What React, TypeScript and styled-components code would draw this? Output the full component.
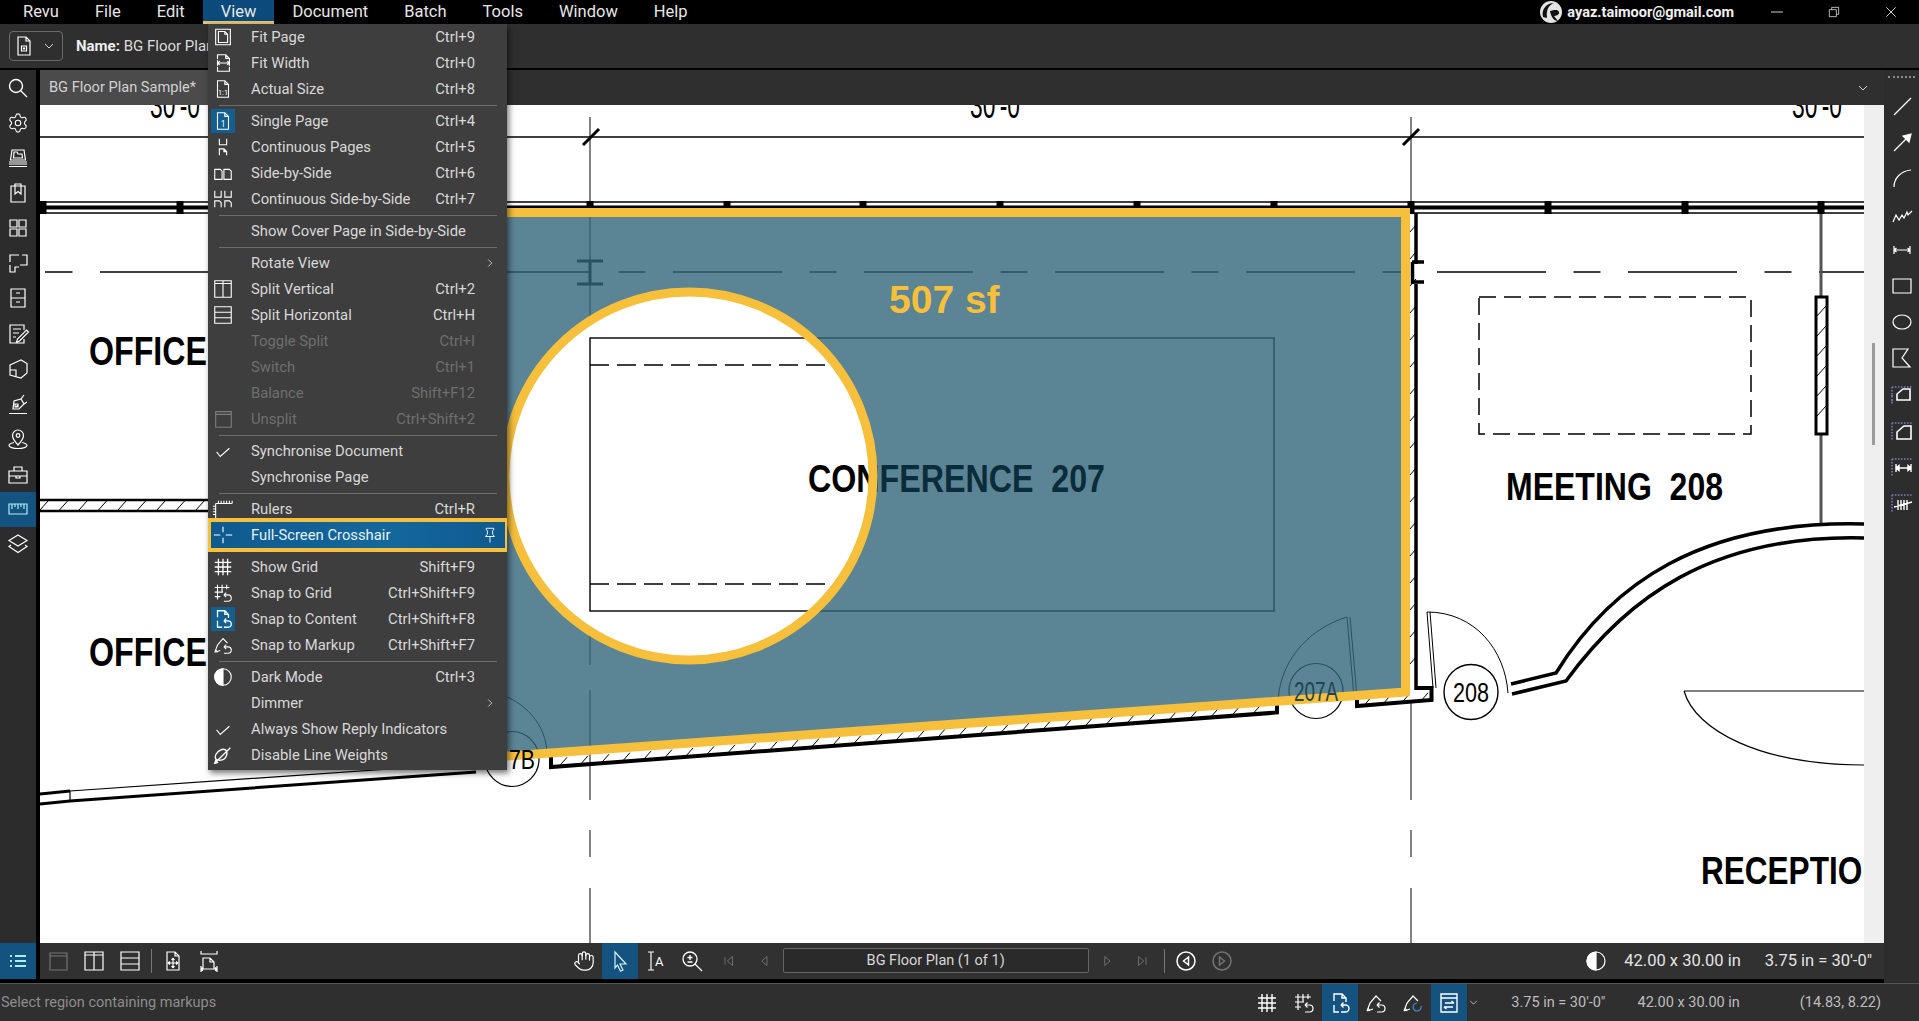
import { ReactNode } from 'react';
import styled, { createGlobalStyle } from 'styled-components';
import { Hand, Settings } from 'lucide-react';

const pageLine = 'M6 3h8l4 4v14H6zM14 3v4h4';
const snapArrow = 'M13 14h4.5a3.5 3.5 0 0 1 0 7H13M13 14l2.5-2.5M13 14l2.5 2.5';

const paths: Record<string, ReactNode> = {
	// menu
	fitPage: <path d="M4 3.5h16v17H4zM7 6h7l3 3v9H7zM14 6v3h3" />,
	fitWidth: <path d="M6 8V3h9l4 4v3M15 3v4h4M6 16v5h13v-5M6 9v6M19 9v6M6 12h13M6 12l2.500-2M6 12l2.500 2M19 12l-2.500-2M19 12l-2.500 2" />,
	actual: (
		<>
			<path d={pageLine} />
			<text x="12" y="18" fontSize="8" fill="#fff" stroke="none" textAnchor="middle" fontFamily="Roboto">1:1</text>
		</>
	),
	single: (
		<>
			<path d={pageLine} />
			<text x="12" y="18" fontSize="9" fill="#fff" stroke="none" textAnchor="middle" fontFamily="Roboto">1</text>
		</>
	),
	continuous: <path d="M8 3v6.500h8V3M8 21v-7h5l3 3v4M13 14v3h3" />,
	sideBySide: <path d="M3 8h6l2 2v9H3zM13 8h6l2 2v9h-8z" />,
	contSide: <path d="M3 3v7h7V3M14 3v7h7V3M3 21v-7h5l2 2v5M14 21v-7h5l2 2v5" />,
	splitV: <path d="M3 3h18v18H3zM12 3v18M3 6h18" />,
	splitH: <path d="M3 3h18v18H3zM3 9h18M3 15h18" />,
	unsplit: <path d="M4 4h17v17H4zM4 7h17" />,
	check: <path d="M5 13l4 5L19 9" />,
	rulers: <path d="M4 6h18M4 6v18M7 3v3M10 3v3M13 3v3M16 3v3M19 3v3M22 3v3M1 9h3M1 12h3M1 15h3M1 18h3" />,
	crosshair: <path d="M12 3v6M12 15v6M2 12h7M15 12h7" />,
	grid: <path d="M7 3v18M12 3v18M17 3v18M3 7h18M3 12h18M3 17h18" strokeWidth="1.400" />,
	snapGrid: <path d={`M6 3v16M11 3v8M16 3v5M3 6h16M3 11h9M3 16h6${snapArrow}`} />,
	snapContent: <path d={`M6 10V3h8l4 4v4M6 14v7h5M14 3v4h4${snapArrow}`} strokeWidth="1.400" />,
	snapMarkup: <path d={`M3 20l3-8 6-7 5 5M3 20l6-2M4 17l2 3${snapArrow}`} />,
	snapMarkupAlt: (
		<>
			<path d="M3 20l3-8 6-7 5 5M3 20l6-2M4 17l2 3" />
			<path d="M20 15a4 4 0 1 1-4-3" stroke="#3a8fd0" />
		</>
	),
	dark: <path d="M12 3a9 9 0 0 0 0 18z" fill="#fff" stroke="#fff" />,
	darkRing: (
		<>
			<circle cx="12" cy="12" r="9" />
			<path d="M12 3a9 9 0 0 0 0 18z" fill="#fff" />
		</>
	),
	weights: <path d="M7 8c4-3 8-3 9 0s-1 8-4 9-7 1-8-1 0-5 3-8zM4 20L20 4M3 21l3-1-2-2z" strokeWidth="1.500" />,
	pin: <path d="M7 3h10v2l-1.500 1v5l2.500 3H6l2.500-3V6L7 5zM12 14v8" />,
	chevron: <path d="M9 6l6 6-6 6" />,
	chevronDown: <path d="M6 9l6 6 6-6" />,
	// left rail
	search: <path d="M10 3.500a6.500 6.500 0 1 0 0 13 6.500 6.500 0 0 0 0-13zM15 15l6 6" strokeWidth="1.400" />,
	studio: <path d="M6 4h12l1.500 10h-15zM8 6h3l1 2h4l.5 4h-9zM3 16h18M3 18h18M3 20.500h18" />,
	bookmark: <path d="M5 5h14v16H5zM9 3v10l3-2.500 3 2.500V3z" />,
	thumbs: <path d="M4 4h7v7H4zM13 4h7v7h-7zM4 13h7v7H4zM13 13h7v7h-7z" />,
	floor: <path d="M4 11V4h9M16 4h5v10h-7M21 14v0M4 14v7h5v-5h4" />,
	cabinet: <path d="M5 3h14v18H5zM5 12h14M10 7h4M10 16h4" />,
	note: <path d="M18 8V3H4v18h14v-4M7 7h8M7 11h6M7 15h3M20.500 8l2 2-9 9-3 1 1-3z" />,
	model: <path d="M4 8l11-5 6 3.500V16l-6 5-11-3zM4 13h6v6" />,
	nib: <path d="M3 21.500h18M7 17l1-8 7-2 3 5-5 5zM15 7l3-4M18 12l3-2M10 15l2-2M9 12h3v3H9z" />,
	place: (
		<>
			<path d="M12 3a5.500 5.500 0 0 1 5.500 5.500C17.500 12 12 18 12 18S6.500 12 6.500 8.500A5.500 5.500 0 0 1 12 3zM8 15.500c-3 .7-5 1.800-5 3 0 1.500 4 3 9 3s9-1.500 9-3c0-1.200-2-2.300-5-3" />
			<circle cx="12" cy="8.500" r="1.800" />
		</>
	),
	toolbox: <path d="M3 9h18v12H3zM8 9V5h8v4M3 14h18M10 14v2h4v-2" />,
	ruler: <path d="M3 7h18v10H3zM6 7v5M9 7v3M12 7v5M15 7v3M18 7v5" stroke="#a8f0f4" />,
	layers: <path d="M12 3l9 5.500-9 5.500-9-5.500zM5 13l-2 1.500 9 6 9-6-2-1.500" />,
	list: <path d="M9 7h11M9 12h11M9 17h11M4 7h2M4 12h2M4 17h2" stroke="#a8f0f4" strokeWidth="2.200" />,
	// right rail
	line: <path d="M4 21L21 4" />,
	arrow: (
		<>
			<path d="M4 21L18 7" />
			<path d="M21 4l-8 2 6 6z" fill="#fff" />
		</>
	),
	arc: <path d="M4 21C4 12 11 5 21 4" />,
	zigzag: <path d="M3 20l3-7 3 5 3-5 2 3 3-6 1 3 4-4" />,
	dim: <path d="M4 12h16M4 8v8M20 8v8M4 12l2.500-2M4 12l2.500 2M20 12l-2.500-2M20 12l-2.500 2" />,
	rect: <path d="M3 5h18v14H3z" />,
	ellipse: <ellipse cx="12" cy="12" rx="9" ry="7" />,
	polyShape: <path d="M3 3h15l-6 9 8 9H3z" />,
	area: (
		<>
			<path d="M2 5h20M2 5v17M2 8v2M2 13v2M2 18v2" stroke="#6a6aa0" strokeDasharray="1.500 1.500" strokeWidth="2" />
			<path d="M7 18V12l6-5h7v11z" strokeWidth="1.600" />
		</>
	),
	cut: (
		<>
			<path d="M2 5h20M2 5v17" stroke="#6a6aa0" strokeDasharray="1.500 1.500" strokeWidth="2" />
			<path d="M7 21V14l7-6h7v13z" strokeWidth="1.600" />
		</>
	),
	span: (
		<>
			<path d="M2 5h20M2 5v17" stroke="#6a6aa0" strokeDasharray="1.500 1.500" strokeWidth="2" />
			<path d="M6 10v8M21 10v8M6 14h15M6 14l3-2.500v5zM21 14l-3-2.500v5z" strokeWidth="1.400" fill="#fff" />
		</>
	),
	tally: (
		<>
			<path d="M2 5h20M2 5v17" stroke="#6a6aa0" strokeDasharray="1.500 1.500" strokeWidth="2" />
			<path d="M8 10v10M11 10v10M14 10v10M17 10v10M4 17l18-5" strokeWidth="1.400" />
		</>
	),
	// bottom
	fitAll: <path d="M6 3h8l4 4v14H6zM14 3v4h4M12 9v10M7 14h10M12 9l-1.500 2M12 9l1.500 2M12 19l-1.500-2M12 19l1.500-2M7 14l2-1.500M7 14l2 1.500M17 14l-2-1.500M17 14l-2 1.500" />,
	fitWide: <path d="M4 2v3h16V2M6 20V9h7l4 4v7M13 9v4h4M4 20h16M4 17v6M20 17v6M4 20l2-1.500M4 20l2 1.500M20 20l-2-1.500M20 20l-2 1.500" />,
	cursor: <path d="M7 3l11 12h-6l3 6-2.500 1.300-3-6.300L7 19z" stroke="#d5f3fa" />,
	textSelect: (
		<>
			<path d="M4 3h6M4 21h6M7 3v18" />
			<text x="11" y="17" fontSize="13" fill="#fff" stroke="none" fontFamily="Roboto">A</text>
		</>
	),
	zoomTool: <path d="M10 3a7 7 0 1 0 0 14 7 7 0 0 0 0-14zM15 15l7 7M10 6v5M7.500 8.500h5M7.500 13h5" strokeWidth="1.300" />,
	first: <path d="M8 7v10M18 6l-7 6 7 6z" />,
	prev: <path d="M16 6l-7 6 7 6z" />,
	next: <path d="M9 6l7 6-7 6z" />,
	last: <path d="M6 6l7 6-7 6zM16 7v10" />,
	back: <path d="M12 3a9 9 0 1 0 0 18 9 9 0 0 0 0-18zM14.500 8l-5 4 5 4z" strokeWidth="1.500" />,
	forward: <path d="M12 3a9 9 0 1 0 0 18 9 9 0 0 0 0-18zM9.500 8l5 4-5 4z" strokeWidth="1.500" />,
	sync: <path d="M4 3h16v18H4zM4 7h16M8 12h9M17 12l-2.500-2M16 16H7M7 16l2.500 2" strokeWidth="1.400" />,
	docIcon: <path d="M6 3h8l4 4v14H6zM14 3v4h4M9.500 12h5v5h-5zM11.500 14h1v1h-1z" />,
	minimize: <path d="M3 12h18" />,
	restore: <path d="M4 8h12v12H4zM8 8V4h12v12h-4" />,
	close: <path d="M5 5l14 14M19 5L5 19" />,
};

type IconProps = {
	name: string;
	size?: number;
	dim?: boolean;
};

function Icon({ name, size = 24, dim = false }: IconProps) {
	return (
		<IconSvg viewBox="0 0 24 24" width={size} height={size} $dim={dim}>
			{paths[name]}
		</IconSvg>
	);
}

type MenuEntry =
	| 'sep'
	| {
			label: string;
			keys?: string;
			icon?: string;
			on?: boolean;
			off?: boolean;
			more?: boolean;
			hot?: boolean;
	  };

const menu: MenuEntry[] = [
	{ label: 'Fit Page', keys: 'Ctrl+9', icon: 'fitPage' },
	{ label: 'Fit Width', keys: 'Ctrl+0', icon: 'fitWidth' },
	{ label: 'Actual Size', keys: 'Ctrl+8', icon: 'actual' },
	'sep',
	{ label: 'Single Page', keys: 'Ctrl+4', icon: 'single', on: true },
	{ label: 'Continuous Pages', keys: 'Ctrl+5', icon: 'continuous' },
	{ label: 'Side-by-Side', keys: 'Ctrl+6', icon: 'sideBySide' },
	{ label: 'Continuous Side-by-Side', keys: 'Ctrl+7', icon: 'contSide' },
	'sep',
	{ label: 'Show Cover Page in Side-by-Side' },
	'sep',
	{ label: 'Rotate View', more: true },
	{ label: 'Split Vertical', keys: 'Ctrl+2', icon: 'splitV' },
	{ label: 'Split Horizontal', keys: 'Ctrl+H', icon: 'splitH' },
	{ label: 'Toggle Split', keys: 'Ctrl+I', off: true },
	{ label: 'Switch', keys: 'Ctrl+1', off: true },
	{ label: 'Balance', keys: 'Shift+F12', off: true },
	{ label: 'Unsplit', keys: 'Ctrl+Shift+2', icon: 'unsplit', off: true },
	'sep',
	{ label: 'Synchronise Document', icon: 'check' },
	{ label: 'Synchronise Page' },
	'sep',
	{ label: 'Rulers', keys: 'Ctrl+R', icon: 'rulers' },
	{ label: 'Full-Screen Crosshair', icon: 'crosshair', hot: true },
	'sep',
	{ label: 'Show Grid', keys: 'Shift+F9', icon: 'grid' },
	{ label: 'Snap to Grid', keys: 'Ctrl+Shift+F9', icon: 'snapGrid' },
	{ label: 'Snap to Content', keys: 'Ctrl+Shift+F8', icon: 'snapContent', on: true },
	{ label: 'Snap to Markup', keys: 'Ctrl+Shift+F7', icon: 'snapMarkup' },
	'sep',
	{ label: 'Dark Mode', keys: 'Ctrl+3', icon: 'darkRing' },
	{ label: 'Dimmer', more: true },
	{ label: 'Always Show Reply Indicators', icon: 'check' },
	{ label: 'Disable Line Weights', icon: 'weights' },
];

const menuBarItems = ['Revu', 'File', 'Edit', 'View', 'Document', 'Batch', 'Tools', 'Window', 'Help'];
const leftTools = ['search', 'gear', 'studio', 'bookmark', 'thumbs', 'floor', 'cabinet', 'note', 'model', 'nib', 'place', 'toolbox', 'ruler', 'layers'];
const rightTools = ['line', 'arrow', 'arc', 'zigzag', 'dim', 'rect', 'ellipse', 'polyShape', 'area', 'cut', 'span', 'tally'];
const columns = [43, 180, 590, 727, 863, 1000, 1137, 1274, 1411, 1548, 1685, 1821];

// y of the thick slanted wall at a given x
const wallY = (x: number) => 766 - (x - 551) * 0.0744;

function range(from: number, to: number, step: number) {
	const out: number[] = [];
	for (let v = from; v <= to; v += step) out.push(v);
	return out;
}

function Plan() {
	return (
		<PlanSvg viewBox="40 105 1824 838" width="1824" height="838">
			<defs>
				<clipPath id="lens">
					<circle cx="689" cy="476" r="184" />
				</clipPath>
			</defs>

			<g fill="none" stroke="#000">
				{/* dimension strings */}
				<path d="M40 137H1864" strokeWidth="1.600" />
				<path d="M590 117V665M590 690V800M590 830V857M590 888V943M1411 117V205M1411 700V800M1411 830V857M1411 888V943" strokeWidth="1.200" stroke="#333" />
				<path d="M583 145L599 129M1403 145L1419 129" strokeWidth="3" />

				{/* top wall */}
				<path d="M40 202H1864M40 213H1864" strokeWidth="1.600" />
				<path d="M40 207.500H1864" strokeWidth="4" />
				{columns.map((x) => (
					<rect key={x} x={x - 3.500} y="201" width="7" height="13" fill="#000" stroke="none" />
				))}

				{/* grid line */}
				<path d="M45 272H72M-91 272H1864" strokeWidth="1.400" strokeDasharray="109 27.500 27 27.500" />
				<path d="M1420 272H1864" stroke="none" />

				{/* left wall and hatch */}
				<path d="M40 500H208M40 511H208" strokeWidth="2.500" />
				{range(40, 210, 19.500).map((x) => (
					<path key={x} d={`M${x} 510L${x + 8} 501`} strokeWidth="1" />
				))}

				{/* i-beam, behind the shade */}
				<path d="M577 261H603M590 261V284M577 284H603" strokeWidth="3" />

				{/* room 207 furniture */}
				<rect x="590" y="338" width="684" height="273" strokeWidth="1.400" />
				<text />

				{/* door 207A and 207B */}
				<path d="M1347 617C1305 630 1278 665 1278 705M1347 617L1354 697M1350 617L1357 697" strokeWidth="1" />
				<ellipse cx="1316" cy="691" rx="27" ry="27.500" strokeWidth="1.200" />
				<path d="M493 692C525 700 547 725 547 755" strokeWidth="1" />
				<ellipse cx="512" cy="759" rx="27" ry="27.500" strokeWidth="1.200" />

				{/* slanted wall */}
				<path d="M551 752V767L1277 712.500V702" strokeWidth="4" />
				{range(560, 1270, 21).map((x) => (
					<path key={x} d={`M${x} ${wallY(x)}L${x + 7} ${wallY(x) - 8}`} strokeWidth="1" />
				))}
				<path d="M1357 697V706L1431.500 700V688H1417" strokeWidth="4" />
				{range(1365, 1425, 19).map((x) => (
					<path key={x} d={`M${x} ${708 - (x - 1357) * 0.08 - 3}L${x + 6} ${708 - (x - 1357) * 0.08 - 10}`} strokeWidth="1" />
				))}

				{/* wall right of room */}
				<path d="M1416 213V264M1416 284V690" strokeWidth="3.500" />
				{range(225, 680, 27).map((y) => (
					<path key={y} d={`M1410 ${y + 7}L1416 ${y}`} strokeWidth="1" />
				))}
				<path d="M1412 262H1424M1412 282H1424M1412.500 262V284" strokeWidth="3.500" />
			</g>

			<Shade d="M480 212.500H1405.500V692L480 758Z" />
			<Border d="M480 212.500H1405.500V692L480 758Z" />

			<RoomLabel x="808" y="492" textLength="297" lengthAdjust="spacingAndGlyphs" fontSize="38" fill="#0b2c3a" xmlSpace="preserve">
				CONFERENCE  207
			</RoomLabel>
			<AreaLabel x="889" y="313">507 sf</AreaLabel>

			{/* magnifier */}
			<circle cx="689" cy="476" r="184" fill="#fff" />
			<g clipPath="url(#lens)">
				<g fill="none" stroke="#000" strokeWidth="1.400">
					<rect x="590" y="338" width="684" height="273" />
					<path d="M590 365H900M590 584H900" strokeDasharray="19 8" />
				</g>
				<RoomLabel x="808" y="492" textLength="297" lengthAdjust="spacingAndGlyphs" fontSize="38" fill="#000" xmlSpace="preserve">
					CONFERENCE  207
				</RoomLabel>
			</g>
			<circle cx="689" cy="476" r="184" fill="none" stroke="#f6bf3c" strokeWidth="9" />

			<g fill="none" stroke="#000">
				{/* meeting room */}
				<rect x="1479" y="297" width="272" height="137" strokeWidth="1.500" strokeDasharray="17 8" />
				<path d="M1821 214V297M1821 434V524" stroke="#555" strokeWidth="3" />
				<rect x="1816" y="297" width="11" height="137" fill="#fff" strokeWidth="3" />
				{range(306, 420, 20).map((y) => (
					<path key={y} d={`M1817 ${y + 10}L1826 ${y}`} strokeWidth="1" />
				))}

				{/* door 208 */}
				<path d="M1427 612C1475 612 1505 650 1508 693M1427 612L1433 688M1430 612L1436 688" strokeWidth="1" />
				<ellipse cx="1471" cy="692" rx="27" ry="27.500" strokeWidth="1.400" />

				{/* reception curved wall */}
				<path d="M1511 684L1556 673C1610 585 1700 520 1864 524" strokeWidth="3.500" />
				<path d="M1512 694L1566 681C1625 600 1710 534 1864 538" strokeWidth="3.500" />
				<path d="M1684 691H1864M1684 691C1695 730 1760 765 1864 765" strokeWidth="1.200" />

				{/* lower left wall */}
				<path d="M40 794L70 791V801L40 804M70 791L476 763" strokeWidth="1.200" />
				<path d="M40 794L70 791M40 804L70 801L476 772" strokeWidth="3" />
			</g>

			<RoomLabel x="89" y="365" textLength="118" lengthAdjust="spacingAndGlyphs" fontSize="41">OFFICE</RoomLabel>
			<RoomLabel x="89" y="666" textLength="118" lengthAdjust="spacingAndGlyphs" fontSize="41">OFFICE</RoomLabel>
			<RoomLabel x="1506" y="500" textLength="217" lengthAdjust="spacingAndGlyphs" fontSize="39" xmlSpace="preserve">
				MEETING  208
			</RoomLabel>
			<RoomLabel x="1701" y="884" textLength="184" lengthAdjust="spacingAndGlyphs" fontSize="38">RECEPTION</RoomLabel>

			<DimLabel x="150" y="118" textLength="50" lengthAdjust="spacingAndGlyphs">30'-0</DimLabel>
			<DimLabel x="970" y="118" textLength="50" lengthAdjust="spacingAndGlyphs">30'-0</DimLabel>
			<DimLabel x="1792" y="118" textLength="50" lengthAdjust="spacingAndGlyphs">30'-0</DimLabel>

			<BubbleLabel x="1471" y="702" textLength="36" lengthAdjust="spacingAndGlyphs">208</BubbleLabel>
			<BubbleLabel x="1316" y="701" textLength="44" lengthAdjust="spacingAndGlyphs" fill="#1f4452">207A</BubbleLabel>
			<BubbleLabel x="522" y="769" textLength="26" lengthAdjust="spacingAndGlyphs">7B</BubbleLabel>
		</PlanSvg>
	);
}

function ViewMenu() {
	return (
		<Dropdown>
			{menu.map((entry, i) =>
				entry === 'sep' ? (
					<Separator key={i} />
				) : (
					<MenuRow key={entry.label} $off={entry.off} $hot={entry.hot}>
						<MenuIcon $on={entry.on} $hot={entry.hot}>
							{entry.icon && <Icon name={entry.icon} size={22} dim={entry.off} />}
						</MenuIcon>
						<MenuLabel>{entry.label}</MenuLabel>
						{entry.keys && <MenuKeys>{entry.keys}</MenuKeys>}
						{entry.more && (
							<MenuEnd>
								<Icon name="chevron" size={14} />
							</MenuEnd>
						)}
						{entry.hot && (
							<MenuEnd>
								<Icon name="pin" size={18} />
							</MenuEnd>
						)}
					</MenuRow>
				),
			)}
		</Dropdown>
	);
}

function App() {
	return (
		<Shell>
			<GlobalStyle />
			<MenuBar>
				{menuBarItems.map((item) => (
					<MenuBarItem key={item} $active={item === 'View'}>
						{item}
					</MenuBarItem>
				))}
				<Account>
					<svg width="24" height="24" viewBox="0 0 24 24">
						<circle cx="12" cy="12" r="11" fill="#e4e4e4" />
						<path d="M4 17C2 9 8 3 15 3c-5 2-8 6-7 15zM11 11c4-1 8-2 9 1s-4 4-5 4l4 5c-4 0-7-4-8-10z" fill="#111" />
					</svg>
					<Email>ayaz.taimoor@gmail.com</Email>
				</Account>
				<WindowButton>
					<Icon name="minimize" size={16} />
				</WindowButton>
				<WindowButton>
					<Icon name="restore" size={14} />
				</WindowButton>
				<WindowButton>
					<Icon name="close" size={16} />
				</WindowButton>
				<ViewMenu />
			</MenuBar>

			<Toolbar>
				<DocButton>
					<Icon name="docIcon" size={24} />
					<Icon name="chevronDown" size={16} />
				</DocButton>
				<DocName>
					<b>Name:</b> BG Floor Plan Sample
				</DocName>
			</Toolbar>

			<Main>
				<LeftRail>
					{leftTools.map((tool) => (
						<RailCell key={tool} $active={tool === 'ruler'}>
							{tool === 'gear' ? <Settings size={22} strokeWidth={1.2} color="#fff" /> : <Icon name={tool} />}
						</RailCell>
					))}
					<ListButton>
						<Icon name="list" />
					</ListButton>
				</LeftRail>

				<Center>
					<Tabs>
						<Tab>BG Floor Plan Sample*</Tab>
						<TabsMenu>
							<Icon name="chevronDown" size={16} />
						</TabsMenu>
					</Tabs>

					<Canvas>
						<Plan />
						<ScrollTrack>
							<ScrollThumb />
						</ScrollTrack>
					</Canvas>

					<BottomBar>
						<ToolGroup>
							<ToolCell>
								<Icon name="unsplit" dim />
							</ToolCell>
							<ToolCell>
								<Icon name="splitV" />
							</ToolCell>
							<ToolCell>
								<Icon name="splitH" />
							</ToolCell>
							<ToolDivider />
							<ToolCell>
								<Icon name="fitAll" />
							</ToolCell>
							<ToolCell>
								<Icon name="fitWide" />
							</ToolCell>
						</ToolGroup>

						<ToolGroup>
							<ToolCell>
								<Hand size={22} strokeWidth={1.3} color="#fff" />
							</ToolCell>
							<ToolCell $on>
								<Icon name="cursor" />
							</ToolCell>
							<ToolCell>
								<Icon name="textSelect" />
							</ToolCell>
							<ToolCell>
								<Icon name="zoomTool" />
							</ToolCell>
							<ToolCell>
								<Icon name="first" size={18} dim />
							</ToolCell>
							<ToolCell>
								<Icon name="prev" size={18} dim />
							</ToolCell>
							<PageBox>BG Floor Plan (1 of 1)</PageBox>
							<ToolCell>
								<Icon name="next" size={18} dim />
							</ToolCell>
							<ToolCell>
								<Icon name="last" size={18} dim />
							</ToolCell>
							<ToolDivider />
							<ToolCell>
								<Icon name="back" />
							</ToolCell>
							<ToolCell>
								<Icon name="forward" dim />
							</ToolCell>
						</ToolGroup>

						<ToolGroup>
							<ToolCell>
								<Icon name="darkRing" />
							</ToolCell>
							<SheetText $left={10}>42.00 x 30.00 in</SheetText>
							<SheetText $left={24}>3.75 in = 30'-0"</SheetText>
						</ToolGroup>
					</BottomBar>
				</Center>

				<RightRail>
					<Grip />
					{rightTools.map((tool) => (
						<RightCell key={tool}>
							<Icon name={tool} />
						</RightCell>
					))}
				</RightRail>
			</Main>

			<StatusBar>
				<StatusHint>Select region containing markups</StatusHint>
				<StatusGroup>
					<StatusCell>
						<Icon name="grid" />
					</StatusCell>
					<StatusCell>
						<Icon name="snapGrid" />
					</StatusCell>
					<StatusCell $on>
						<Icon name="snapContent" />
					</StatusCell>
					<StatusCell>
						<Icon name="snapMarkup" />
					</StatusCell>
					<StatusCell>
						<Icon name="snapMarkupAlt" />
					</StatusCell>
					<StatusCell $on>
						<Icon name="sync" />
					</StatusCell>
					<Icon name="chevronDown" size={13} />
				</StatusGroup>
				<StatusText $left={31}>3.75 in = 30'-0"</StatusText>
				<StatusText $left={32}>42.00 x 30.00 in</StatusText>
				<StatusText $left={60}>(14.83, 8.22)</StatusText>
			</StatusBar>
		</Shell>
	);
}

export default App;

const GlobalStyle = createGlobalStyle`
	html, body {
		margin: 0;
		height: 100%;
		overflow: hidden;
		background: #2f2f2f;
	}
	* {
		box-sizing: border-box;
	}
`;

const Shell = styled.div`
	width: 100vw;
	height: 100vh;
	display: flex;
	flex-direction: column;
	font-family: Roboto, 'Liberation Sans', sans-serif;
	color: #dcdcdc;
`;

const IconSvg = styled.svg<{ $dim: boolean }>`
	display: block;
	flex: none;
	fill: none;
	stroke: #fff;
	stroke-width: 1.2;
	opacity: ${(p) => (p.$dim ? 0.32 : 1)};
`;

const MenuBar = styled.div`
	height: 24px;
	flex: none;
	display: flex;
	align-items: stretch;
	padding-left: 5px;
	background: #000;
	position: relative;
	z-index: 5;
`;

const MenuBarItem = styled.div<{ $active: boolean }>`
	padding: 0 18px;
	line-height: 24px;
	font-size: 16.5px;
	color: #e6e6e6;
	background: ${(p) => (p.$active ? '#0c4a7c' : 'transparent')};
	border-bottom: 3px solid ${(p) => (p.$active ? '#e3c372' : 'transparent')};
`;

const Account = styled.div`
	margin-left: auto;
	display: flex;
	align-items: center;
	gap: 4px;
	margin-right: 14px;
`;

const Email = styled.span`
	font-size: 14.5px;
	font-weight: 700;
	color: #f0f0f0;
`;

const WindowButton = styled.div`
	width: 57px;
	display: flex;
	align-items: center;
	justify-content: center;
`;

const Dropdown = styled.div`
	position: absolute;
	top: 24px;
	left: 208px;
	width: 299px;
	height: 746px;
	background: #3e3e3e;
	box-shadow: 2px 3px 6px rgba(0, 0, 0, 0.55);
`;

const Separator = styled.div`
	height: 6px;
	margin: 0 10px 0 11px;
	display: flex;
	align-items: center;

	&::before {
		content: '';
		flex: 1;
		height: 1px;
		background: #6c6c6c;
	}
`;

const MenuRow = styled.div<{ $off?: boolean; $hot?: boolean }>`
	height: 26px;
	display: flex;
	align-items: center;
	position: relative;
	font-size: 14.8px;
	color: ${(p) => (p.$off ? '#6e6e6e' : '#d8d8d8')};
	${(p) =>
		p.$hot &&
		`
		color: #e6f0f5;
		background: linear-gradient(90deg, #0f5a8f, #14679c 60%, #0f5a8f);
		box-shadow: inset 3px 0 0 #f6bf3c, inset -2px 0 0 #f6bf3c, 0 -4px 0 #f6bf3c, 0 4px 0 #f6bf3c;
		z-index: 1;
	`}
`;

const MenuIcon = styled.div<{ $on?: boolean; $hot?: boolean }>`
	width: 24px;
	height: 24px;
	margin: 0 16px 0 3px;
	display: flex;
	align-items: center;
	justify-content: center;
	background: ${(p) => (p.$on ? '#145f92' : 'transparent')};
`;

const MenuLabel = styled.span`
	flex: 1;
	white-space: nowrap;
`;

const MenuKeys = styled.span`
	margin-right: 32px;
	white-space: nowrap;
`;

const MenuEnd = styled.span`
	width: 32px;
	margin-right: 1px;
	display: flex;
	justify-content: center;
`;

const Toolbar = styled.div`
	height: 46px;
	flex: none;
	display: flex;
	align-items: center;
	padding: 0 0 1px 9px;
	background: #2f2f2f;
	border-bottom: 2px solid #000;
`;

const DocButton = styled.div`
	width: 54px;
	height: 30px;
	display: flex;
	align-items: center;
	gap: 5px;
	padding-left: 2px;
	border: 1px solid #6a6a6a;
	border-radius: 4px;
`;

const DocName = styled.div`
	margin-left: 13px;
	font-size: 15px;
	white-space: nowrap;

	b {
		font-weight: 700;
		color: #eee;
	}
`;

const Main = styled.div`
	flex: 1;
	min-height: 0;
	display: flex;
`;

const LeftRail = styled.div`
	width: 40px;
	flex: none;
	display: flex;
	flex-direction: column;
	background: #2c2c2c;
	border-right: 4px solid #000;
	border-bottom: 4px solid #000;
`;

const RailCell = styled.div<{ $active: boolean }>`
	height: 35.15px;
	display: flex;
	align-items: center;
	justify-content: center;
	background: ${(p) => (p.$active ? '#14527f' : 'transparent')};
`;

const ListButton = styled.div`
	margin-top: auto;
	height: 36px;
	display: flex;
	align-items: center;
	justify-content: center;
	background: #14527f;
`;

const Center = styled.div`
	flex: 1;
	min-width: 0;
	display: flex;
	flex-direction: column;
`;

const Tabs = styled.div`
	height: 35px;
	flex: none;
	display: flex;
	align-items: stretch;
	background: #2f2f2f;
`;

const Tab = styled.div`
	width: 175px;
	padding-left: 9px;
	line-height: 34px;
	font-size: 14.6px;
	white-space: nowrap;
	color: #d2d2d2;
	background: #4b4b4b;
`;

const TabsMenu = styled.div`
	margin-left: auto;
	width: 42px;
	display: flex;
	align-items: center;
	justify-content: center;
`;

const Canvas = styled.div`
	flex: 1;
	min-height: 0;
	display: flex;
	background: #fff;
`;

const PlanSvg = styled.svg`
	display: block;
	flex: none;
`;

const Shade = styled.path`
	fill: #326579;
	fill-opacity: 0.8;
`;

const Border = styled.path`
	fill: none;
	stroke: #f6bf3c;
	stroke-width: 9;
`;

const RoomLabel = styled.text`
	font-family: 'Liberation Sans', sans-serif;
	font-weight: 700;
	white-space: pre;
`;

const AreaLabel = styled.text`
	font-family: 'Liberation Sans', sans-serif;
	font-weight: 700;
	font-size: 39px;
	fill: #f6bf3c;
`;

const DimLabel = styled.text`
	font-family: 'Liberation Sans', sans-serif;
	font-size: 36px;
`;

const BubbleLabel = styled.text`
	font-family: 'Liberation Sans', sans-serif;
	font-size: 28px;
	text-anchor: middle;
`;

const ScrollTrack = styled.div`
	flex: 1;
	padding: 238px 0 0 8px;
	background: #efefef;
`;

const ScrollThumb = styled.div`
	width: 3px;
	height: 102px;
	background: #9c9c9c;
`;

const BottomBar = styled.div`
	height: 40px;
	flex: none;
	display: flex;
	justify-content: space-between;
	padding: 0 12px 0 0;
	background: #313131;
	border-bottom: 4px solid #000;
`;

const ToolGroup = styled.div`
	display: flex;
	align-items: stretch;
`;

const ToolCell = styled.div<{ $on?: boolean }>`
	width: 36px;
	display: flex;
	align-items: center;
	justify-content: center;
	background: ${(p) => (p.$on ? '#14527f' : 'transparent')};
`;

const ToolDivider = styled.div`
	width: 1px;
	margin: 6px 3px;
	background: #777;
`;

const PageBox = styled.div`
	width: 306px;
	height: 25px;
	margin: 5px 0 0 1px;
	text-align: center;
	line-height: 23px;
	font-size: 14.5px;
	color: #d8d8d8;
	background: #2a2a2a;
	border: 1px solid #666;
	border-radius: 2px;
`;

const SheetText = styled.span<{ $left: number }>`
	margin-left: ${(p) => p.$left}px;
	line-height: 36px;
	font-size: 16.5px;
	color: #e4e4e4;
	white-space: nowrap;
`;

const RightRail = styled.div`
	width: 35px;
	flex: none;
	display: flex;
	flex-direction: column;
	background: #2d2d2d;
`;

const Grip = styled.div`
	height: 11.5px;
	margin: 6px 4px 0;
	border-top: 2px dotted #8a8a8a;
`;

const RightCell = styled.div`
	height: 36px;
	display: flex;
	align-items: center;
	justify-content: center;
`;

const StatusBar = styled.div`
	height: 38px;
	flex: none;
	display: flex;
	align-items: stretch;
	padding: 0 38px 0 1px;
	font-size: 14.5px;
	line-height: 37px;
	background: #2f2f2f;
	border-top: 1px solid #555;
`;

const StatusHint = styled.div`
	color: #8d8d8d;
	white-space: nowrap;
`;

const StatusGroup = styled.div`
	margin-left: auto;
	display: flex;
	align-items: center;
`;

const StatusCell = styled.div<{ $on?: boolean }>`
	width: 36.4px;
	height: 100%;
	display: flex;
	align-items: center;
	justify-content: center;
	background: ${(p) => (p.$on ? '#14527f' : 'transparent')};
`;

const StatusText = styled.span<{ $left: number }>`
	margin-left: ${(p) => p.$left}px;
	color: #bdbdbd;
	white-space: nowrap;
`;
